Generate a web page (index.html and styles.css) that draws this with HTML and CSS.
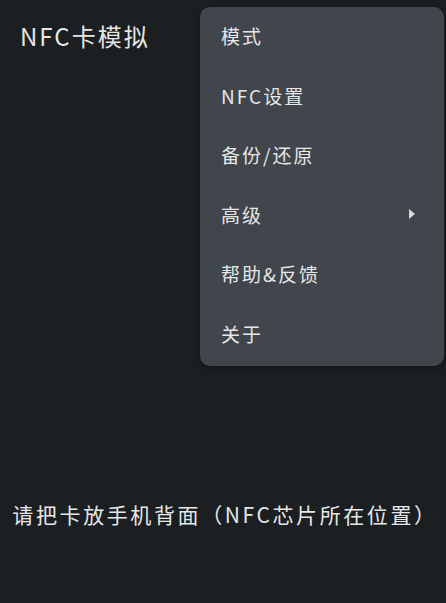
FILE: index.html
```html
<!DOCTYPE html>
<html>

<head>
    <title>NFC卡模拟</title>
    <link rel="stylesheet" href="styles.css">
</head>

<body>
    <div class="app">
        <div class="toolbar">
            <span class="title">NFC卡模拟</span>
        </div>
        <div class="content">
            <p class="hint">请把卡放手机背面（NFC芯片所在位置）</p>
        </div>

        <!-- 弹出菜单 -->
        <div class="menu">
            <div class="menu-item">模式</div>
            <div class="menu-item">NFC设置</div>
            <div class="menu-item">备份/还原</div>
            <div class="menu-item has-sub">高级
                <svg class="arrow" width="8" height="12" viewBox="0 0 8 12"><path d="M1 1 L7 6 L1 11 Z" fill="#d8d8d8"/></svg>
            </div>
            <div class="menu-item">帮助&amp;反馈</div>
            <div class="menu-item">关于</div>
        </div>
    </div>
</body>

</html>
```

FILE: styles.css
```css
html,
body {
    margin: 0;
    height: 100%;
    background: #1b1f22;
    color: #e6e6e6;
    font-family: "Noto Sans CJK SC", "Noto Sans", sans-serif;
}

.app {
    position: relative;
    height: 100%;
    display: flex;
    flex-direction: column;
}

.toolbar {
    height: 72px;
    display: flex;
    align-items: center;
    padding-left: 20px;
    padding-bottom: 2px;
    box-sizing: border-box;
}

.title {
    font-size: 24px;
    letter-spacing: 2px;
}

.content {
    flex: 1;
    display: flex;
    flex-direction: column;
    align-items: center;
}

.hint {
    margin: 428px 0 0 4px;
    font-size: 21px;
    letter-spacing: 2.6px;
    line-height: 28px;
}

/* 菜单 */
.menu {
    position: absolute;
    top: 7px;
    left: 200px;
    right: 2px;
    height: 359px;
    background: #40464c;
    border-radius: 10px;
    box-sizing: border-box;
    box-shadow: 0 2px 6px rgba(0, 0, 0, 0.3);
}

.menu-item {
    height: 59.5px;
    display: flex;
    align-items: center;
    padding-left: 21px;
    padding-right: 28px;
    padding-bottom: 2px;
    box-sizing: border-box;
    font-size: 19px;
    letter-spacing: 2px;
}

.has-sub {
    justify-content: space-between;
}
```
